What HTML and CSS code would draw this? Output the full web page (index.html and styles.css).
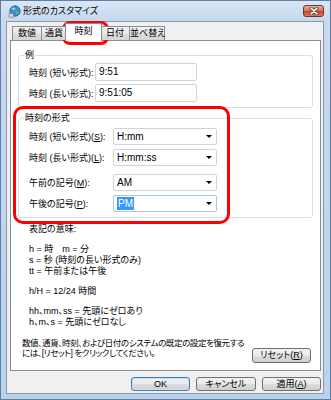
FILE: index.html
```html
<!DOCTYPE html>
<html lang="ja">
<head>
  <meta charset="UTF-8" />
  <meta name="viewport" content="width=device-width, initial-scale=1.0" />
  <title>形式のカスタマイズ</title>
  <link rel="stylesheet" href="styles.css">
</head>
<body>
  <div class="window">
    <div class="titlebar">
      <svg class="app-icon" width="13" height="13" viewBox="0 0 13 13">
        <circle cx="7" cy="6" r="5.2" fill="#3b8fd9" stroke="#1d5a9e" stroke-width="0.8" />
        <path d="M4 3.2 Q6 2.4 6.8 4 Q6.2 5.6 4.6 5.4 Q3.6 4.6 4 3.2 Z" fill="#5fbf4a" />
        <path d="M8 6.5 Q10 6 10.8 7.4 Q9.8 9.6 8.4 9.4 Q7.6 8 8 6.5 Z" fill="#5fbf4a" />
        <ellipse cx="5.6" cy="3.6" rx="2" ry="1.1" fill="#ffffff" opacity="0.5" />
        <rect x="1" y="8.5" width="4.5" height="3.8" rx="0.6" fill="#d8d8d8" stroke="#6d6d6d" stroke-width="0.6" />
      </svg>
      <span class="title">形式のカスタマイズ</span>
      <div class="close-btn">
        <svg width="10" height="8" viewBox="0 0 10 8">
          <path d="M2 1.2 L8 6.8 M8 1.2 L2 6.8" stroke="#4b2a25" stroke-width="3" stroke-linecap="round" />
          <path d="M2 1.2 L8 6.8 M8 1.2 L2 6.8" stroke="#ffffff" stroke-width="1.6" stroke-linecap="round" />
        </svg>
      </div>
    </div>

    <div class="client">
      <div class="tabs">
        <div class="tab tab-num">数値</div>
        <div class="tab tab-cur">通貨</div>
        <div class="tab tab-time active">時刻</div>
        <div class="tab tab-date">日付</div>
        <div class="tab tab-sort">並べ替え</div>
      </div>

      <div class="panel">
        <fieldset class="group">
          <legend>例</legend>
          <div class="rows rows-example">
            <div class="row"><label>時刻 (短い形式):</label><div class="textbox">9:51</div></div>
            <div class="row"><label>時刻 (長い形式):</label><div class="textbox">9:51:05</div></div>
          </div>
        </fieldset>

        <fieldset class="group group-format">
          <legend>時刻の形式</legend>
          <div class="rows rows-format">
            <div class="row"><label>時刻 (短い形式)(<u>S</u>):</label><div class="combo">H:mm<span class="arrow"></span></div></div>
            <div class="row"><label>時刻 (長い形式)(<u>L</u>):</label><div class="combo">H:mm:ss<span class="arrow"></span></div></div>
            <div class="row row-gap"><label>午前の記号(<u>M</u>):</label><div class="combo">AM<span class="arrow"></span></div></div>
            <div class="row"><label>午後の記号(<u>P</u>):</label><div class="combo focused"><span class="selected">PM</span><span class="arrow"></span></div></div>
          </div>
        </fieldset>

        <div class="notes">
          <p>表記の意味:</p>
          <p>h = 時　m = 分<br>s = 秒 (時刻の長い形式のみ)<br>tt = 午前または午後</p>
          <p>h/H = 12/24 時間</p>
          <p>hh、mm、ss = 先頭にゼロあり<br>h、m、s = 先頭にゼロなし</p>
        </div>

        <div class="reset-row">
          <p>数値、通貨、時刻、および日付のシステムの既定の設定を復元する<br>には、[リセット] をクリックしてください。</p>
          <button class="btn btn-reset">リセット(<u>R</u>)</button>
        </div>
      </div>

      <div class="buttons">
        <button class="btn btn-default">OK</button>
        <button class="btn btn-cancel">キャンセル</button>
        <button class="btn">適用(<u>A</u>)</button>
      </div>
    </div>

    <!-- red annotation marks -->
    <div class="mark mark-tab"></div>
    <div class="mark mark-format"></div>
  </div>
</body>
</html>
```

FILE: styles.css
```css
* {
  box-sizing: border-box;
}
body {
  margin: 0;
  font-family: "Liberation Sans", "Noto Sans CJK JP", sans-serif;
  font-size: 9px;
  font-feature-settings: "palt";
  color: #000;
  background: #fff;
}
.window {
  position: relative;
  width: 331px;
  height: 400px;
  border: 1px solid #5f7ea5;
  padding: 0 6px 5px 5px;
  background: linear-gradient(#d9e6f5, #c6d9ef 20px, #bcd2eb);
  display: flex;
  flex-direction: column;
}
.titlebar {
  height: 20px;
  display: flex;
  align-items: center;
  padding-left: 2px;
}
.app-icon {
  margin-right: 2px;
}
.title {
  flex: 1;
  line-height: 12px;
}
.close-btn {
  width: 21px;
  height: 12px;
  border: 1px solid #6e3329;
  border-radius: 3px;
  background: linear-gradient(#eab0a4, #d9735e 45%, #c5452d 55%, #d97a62);
  display: flex;
  align-items: center;
  justify-content: center;
}
.client {
  flex: 1;
  border: 1px solid #8798b0;
  background: #f0f0f0;
  padding: 0 2px 0 3px;
  display: flex;
  flex-direction: column;
}

/* tabs */
.tabs {
  position: relative;
  z-index: 1;
  height: 19px;
  margin: 0 0 -1px 2px;
  display: flex;
  align-items: flex-end;
}
.tab {
  height: 14px;
  margin-bottom: 1px;
  border: 1px solid #898c95;
  border-bottom: none;
  background: linear-gradient(#f4f4f4, #e6e6e6 50%, #dcdcdc 51%, #d6d6d6);
  text-align: center;
  line-height: 13px;
  white-space: nowrap;
}
.tab-num { width: 30px; }
.tab-cur { width: 26px; margin-left: -1px; }
.tab-time { width: 37px; }
.tab-date { width: 30px; }
.tab-sort { width: 36px; margin-left: -1px; }
.tab.active {
  height: 18px;
  margin: 0 -2px;
  background: #fff;
  line-height: 15px;
  position: relative;
}
.panel {
  height: 331px;
  border: 1px solid #898c95;
  background: #fff;
  display: flex;
  flex-direction: column;
}

/* group boxes */
.group {
  margin: 9px 7px 0 7px;
  padding: 0 6px 5px 5px;
  border: 1px solid #d5dfe5;
  border-radius: 3px;
  min-width: 0;
}
.group legend {
  padding: 0 1px;
  line-height: 10px;
}
.group-format {
  margin-top: 5px;
}
.rows {
  padding-left: 5px;
  display: flex;
  flex-direction: column;
}
.rows-example {
  margin-top: 3px;
  gap: 3px;
}
.rows-format {
  margin-top: 5px;
  gap: 4px;
}
.row {
  display: flex;
  align-items: center;
}
.row label {
  white-space: nowrap;
}
.rows-example label {
  width: 66px;
}
.rows-format label {
  width: 84px;
}
.row-gap {
  margin-top: 4px;
}
.textbox {
  width: 102px;
  height: 18px;
  border: 1px solid #d2d4d8;
  border-radius: 2px;
  padding-left: 3px;
  font-size: 10px;
  line-height: 16px;
}
.combo {
  position: relative;
  width: 104px;
  height: 17px;
  border: 1px solid #d2d4d8;
  border-radius: 2px;
  padding-left: 3px;
  font-size: 10px;
  line-height: 15px;
}
.combo.focused {
  border-color: #a9c7e6;
}
.combo .selected {
  display: inline-block;
  padding: 0 1px;
  background: #3399ff;
  color: #fff;
  line-height: 13px;
  margin-top: 1px;
}
.combo .arrow {
  position: absolute;
  right: 4px;
  top: 6px;
  border-left: 3px solid transparent;
  border-right: 3px solid transparent;
  border-top: 3px solid #000;
}

/* notes */
.notes {
  margin: 6px 0 0 18px;
}
.notes p {
  margin: 0 0 9px;
  line-height: 11px;
}
.reset-row {
  margin-top: auto;
  padding: 0 9px 7px 11px;
  display: flex;
  align-items: flex-end;
  justify-content: space-between;
}
.reset-row p {
  margin: 0 0 5px;
  font-size: 8.5px;
  letter-spacing: -0.4px;
  line-height: 10px;
  white-space: nowrap;
}

/* buttons */
.btn {
  height: 15px;
  padding: 0;
  border: 1px solid #707070;
  border-radius: 3px;
  background: linear-gradient(#f2f2f2, #ebebeb 50%, #dddddd 51%, #cfcfcf);
  font-family: inherit;
  font-size: 9px;
  font-feature-settings: "palt";
  line-height: 13px;
  color: #000;
  white-space: nowrap;
}
.btn-reset {
  width: 59px;
  flex-shrink: 0;
}
.buttons {
  margin-top: 6px;
  display: flex;
  justify-content: flex-end;
  gap: 6px;
}
.buttons .btn {
  width: 59px;
  height: 14px;
}
.buttons .btn-cancel {
  width: 60px;
}
.btn-default {
  border-color: #3c7fb1;
  box-shadow: inset 0 0 0 1px #c4e3f7;
}

/* red annotation marks */
.mark {
  position: absolute;
  border: 3px solid #ff0000;
}
.mark-tab {
  left: 61px;
  top: 20px;
  width: 47px;
  height: 24px;
  border-radius: 8px;
}
.mark-format {
  left: 12px;
  top: 105px;
  width: 217px;
  height: 118px;
  border-radius: 10px;
}
```
